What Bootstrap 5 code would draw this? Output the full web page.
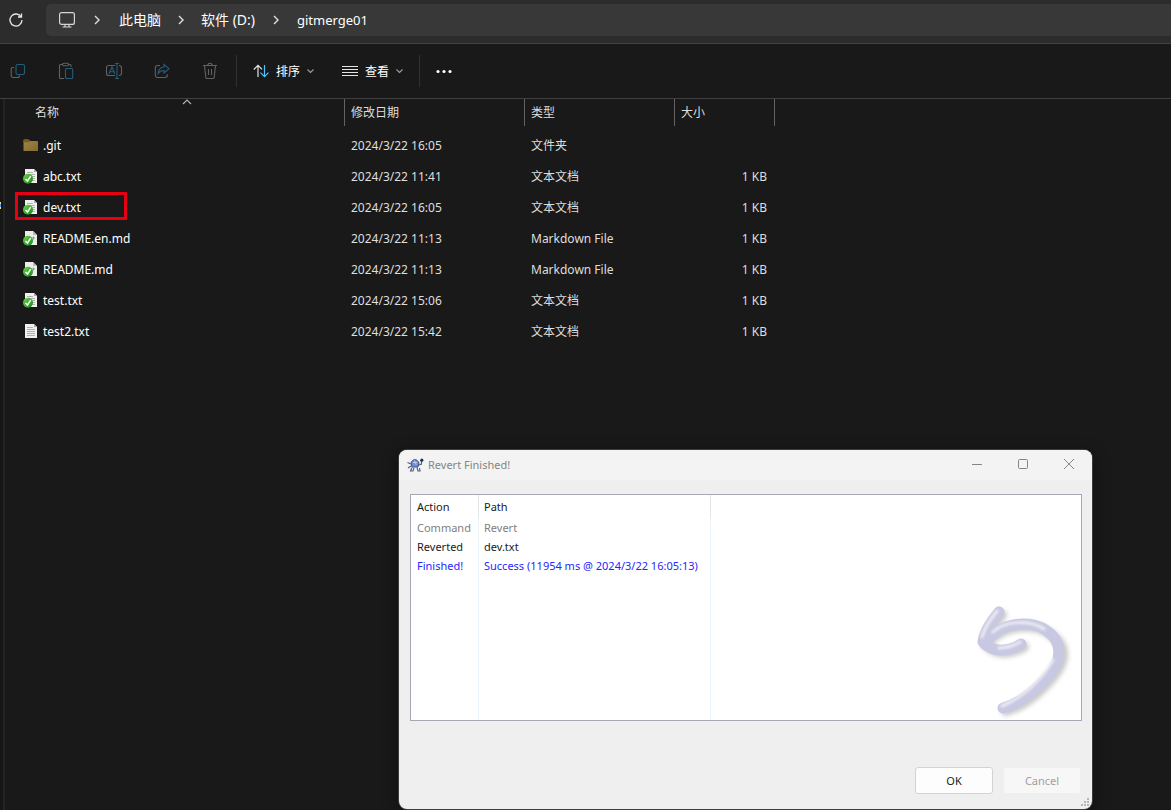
<!DOCTYPE html>
<html lang="zh-CN">
<head>
<meta charset="utf-8">
<meta name="viewport" content="width=device-width, initial-scale=1">
<title>gitmerge01</title>
<link href="https://cdn.jsdelivr.net/npm/bootstrap@5.3.0/dist/css/bootstrap.min.css" rel="stylesheet">
<style>
  body { background: #191919; color: #fff; font: 12px/16px "Noto Sans", "Noto Sans CJK SC", sans-serif; min-height: 100vh; overflow: hidden; }
  svg { display: block; flex: none; fill: none; }
  button { font: inherit; }
  a { color: inherit; text-decoration: none; }
  .addressbar { background: #2c2c2c; height: 44px; border-bottom: 1px solid #414141; padding: 0 0 3px 8px; gap: 22px; }
  .plain-btn { background: none; border: 0; padding: 0; color: #fff; }
  .crumbs { background: #383838; height: 32px; border-radius: 5px 0 0 5px; padding-left: 13px; }
  .crumbs ol { font-size: 14px; line-height: 18px; }
  .crumbs a[aria-current] { font-size: 13px; }
  .toolbar { height: 55px; border-bottom: 1px solid #404040; }
  .tool { width: 36px; height: 36px; }
  .tool-group { gap: 12px; }
  .rule { width: 1px; height: 32px; background: #303030; }
  .tool-menu { height: 32px; gap: 7px; }
  .tool-menu span { padding-top: 2px; }
  .edge { width: 5px; border-right: 2px solid #242424; background: #161616; }
  .edge svg { position: absolute; left: 0; top: 103px; }
  .files { table-layout: fixed; width: 770px; border-collapse: separate; border-spacing: 0; }
  .files th { font-weight: 400; height: 27px; padding: 0 6px; color: #dedede; border-right: 1px solid #636363; }
  .files th:first-child { padding-left: 30px; }
  .files td { height: 31px; padding: 0 6px; color: #dedede; }
  .files td:first-child { padding-left: 18px; color: #fff; position: relative; }
  .files td:last-child { text-align: right; padding-right: 8px; }
  .files .gap-row td { height: 4px; }
  .file-name { gap: 4px; }
  .marker { position: absolute; left: 10px; top: 0; width: 112px; height: 28px; border: 3px solid #e60012; }
  .sort-mark { position: absolute; left: 177px; top: 0; }
  .dialog-win { position: absolute; right: 79px; top: 450px; width: 693px; background: #efefef; color: #1b1b1b; border-radius: 8px; overflow: hidden; box-shadow: 0 0 0 1px #3c3c3c, 0 4px 18px rgba(0,0,0,.45); font-size: 11px; }
  .dialog-title { height: 30px; background: #f3f3f3; color: #858585; padding: 0 17px 0 8px; }
  .win-buttons { gap: 34px; }
  .log-box { margin: 14px 10px 0 11px; height: 227px; border: 1px solid #a6a9b5; background: #fff; position: relative; }
  .log-box table { height: 100%; border-collapse: separate; border-spacing: 0; table-layout: fixed; width: 300px; }
  .log-box th, .log-box td { padding: 0 0 0 5px; border-right: 1px solid #eaf3fa; height: 19px; font-weight: 400; white-space: nowrap; line-height: 19px; }
  .log-box th { height: 23px; line-height: 23px; border-color: #e5e5e5; }
  .log-box tr > :first-child { padding-left: 6px; }
  .log-box tr.fill-row td { height: auto; }
  .muted td { color: #808080; }
  .done td { color: #2626ff; }
  .revert-art { position: absolute; right: 6px; bottom: 0; }
  .dialog-foot { padding: 46px 11px 15px; gap: 10px; }
  .dlg-btn { width: 78px; height: 27px; border: 1px solid #d3d3d3; border-radius: 3px; background: #fdfdfd; color: #1b1b1b; padding: 0; }
  .dlg-btn:disabled { background: #f7f7f7; border-color: #efefef; color: #a0a0a0; }
  .grip { position: absolute; right: 2px; bottom: 1px; }
</style>
</head>
<body class="d-flex flex-column">
<svg width="0" height="0" class="position-absolute" aria-hidden="true">
  <defs>
    <linearGradient id="gGreen" x1="0" y1="0" x2="1" y2="1"><stop offset="0" stop-color="#6fd64a"/><stop offset="1" stop-color="#128a14"/></linearGradient>
    <linearGradient id="gFold" x1="0" y1="0" x2="1" y2="1"><stop offset="0" stop-color="#a08548"/><stop offset="1" stop-color="#86692f"/></linearGradient>
    <symbol id="page" viewBox="0 0 16 16"><path d="M2 0h9l3 3v11H2z" fill="#f1f1f1"/><path d="M11 0v3h3z" fill="#a9a9a9"/><path d="M4 3.500h6M4 5.500h8M4 7.500h8M4 9.500h8M4 11.500h8" stroke="#b0b0b0"/></symbol>
    <symbol id="tick" viewBox="0 0 16 16"><circle cx="5" cy="9.800" r="5" fill="url(#gGreen)"/><path d="M2.500 10l2 2 3.200-4.800" stroke="#fff" stroke-width="1.500"/></symbol>
    <symbol id="txt" viewBox="0 0 16 16"><use href="#page"/><use href="#tick"/></symbol>
    <symbol id="md" viewBox="0 0 16 16"><path d="M2 0h8l4 4v10H2z" fill="#ededed"/><path d="M10 0v4h4z" fill="#bcbcbc"/><path d="M9 7h3M10.500 5.500v3" stroke="#999"/><use href="#tick"/></symbol>
  </defs>
</svg>

<header class="addressbar d-flex align-items-center">
  <button class="plain-btn" aria-label="刷新"><svg width="16" height="16" stroke="#e8e8e8" stroke-width="1.300"><path d="M13.200 5A6 6 0 1 0 14 8M13.500 1.500V5H10"/></svg></button>
  <nav class="crumbs d-flex align-items-center flex-grow-1" aria-label="地址">
    <svg width="16" height="16" stroke="#d6d6d6" stroke-width="1.200"><rect x=".6" y=".6" width="14.800" height="11.800" rx="2"/><path d="M6 12.500v2M10 12.500v2M3.500 15h9"/></svg>
    <ol class="list-unstyled d-flex align-items-center mb-0">
      <li class="d-flex align-items-center"><svg width="44" height="12" stroke="#e0e0e0" stroke-width="1.400"><path d="M20 2l4 4-4 4"/></svg><a href="#">此电脑</a></li>
      <li class="d-flex align-items-center"><svg width="40" height="12" stroke="#e0e0e0" stroke-width="1.400"><path d="M18 2l4 4-4 4"/></svg><a href="#">软件 (D:)</a></li>
      <li class="d-flex align-items-center"><svg width="42" height="12" stroke="#e0e0e0" stroke-width="1.400"><path d="M19 2l4 4-4 4"/></svg><a href="#" aria-current="page">gitmerge01</a></li>
    </ol>
  </nav>
</header>

<div class="toolbar d-flex align-items-center" role="toolbar" aria-label="工具栏">
  <div class="tool-group d-flex">
    <button class="plain-btn tool d-flex align-items-center justify-content-center" aria-label="复制"><svg width="16" height="16" stroke="#626262" stroke-width="1.100"><path d="M4 4.500H3a1.800 1.800 0 0 0-1.800 1.800V12.500A2 2 0 0 0 3 14.500h4.500A2 2 0 0 0 9.500 12.500"/><rect x="6" y="1.500" width="8.500" height="10" rx="1.800" stroke="#265d7c"/></svg></button>
    <button class="plain-btn tool d-flex align-items-center justify-content-center" aria-label="粘贴"><svg width="16" height="18" stroke="#626262" stroke-width="1.100"><path d="M4.500 2.500H2.500a1 1 0 0 0-1 1V15.500a1 1 0 0 0 1 1H6M10.500 2.500h1.500a1 1 0 0 1 1 1V5"/><rect x="4.500" y="1.300" width="6" height="2.400" rx="1.200"/><rect x="7.500" y="6.500" width="7.200" height="10" rx="1" stroke="#265d7c"/></svg></button>
    <button class="plain-btn tool d-flex align-items-center justify-content-center" aria-label="重命名"><svg width="18" height="18" stroke="#626262" stroke-width="1.100"><path d="M10 3.500H3.500a2 2 0 0 0-2 2v6a2 2 0 0 0 2 2H10M14 3.500a2.500 2.500 0 0 1 2.500 2.500v5a2.500 2.500 0 0 1-2.500 2.500"/><path d="M4 12l3-7 3 7M5 9.700h4M12 1.500v15M10 1.500h4M10 16.500h4" stroke="#265d7c"/></svg></button>
    <button class="plain-btn tool d-flex align-items-center justify-content-center" aria-label="共享"><svg width="16" height="16" stroke="#626262" stroke-width="1.100"><path d="M6 2.500H3.500a2.200 2.200 0 0 0-2.200 2.200v7.600a2.200 2.200 0 0 0 2.200 2.200h7.600a2.200 2.200 0 0 0 2.200-2.200v-1"/><path d="M10 1.500l5 4.200-5 4.300V7.500C7.500 7.300 6 8 4.200 10.500 4.500 6.500 6.500 4.200 10 4z" stroke="#265d7c"/></svg></button>
    <button class="plain-btn tool d-flex align-items-center justify-content-center" aria-label="删除"><svg width="16" height="18" stroke="#626262" stroke-width="1.100"><path d="M1 3.500h14M2.500 3.500l1.300 11.800a1.400 1.400 0 0 0 1.400 1.200h5.600a1.400 1.400 0 0 0 1.400-1.200L13.500 3.500M5.800 3.500a2.200 2.200 0 0 1 4.400 0M6.500 7v6M9.500 7v6"/></svg></button>
  </div>
  <div class="rule ms-2"></div>
  <button class="plain-btn tool-menu d-flex align-items-center ms-3"><svg width="16" height="16" stroke="#e4e4e4" stroke-width="1.200"><path d="M5 14V2.500M.8 6.500L5 2.300l4 4"/><path d="M11.500 2v11.500M7.500 9.700l4 4 4-4" stroke="#4cc2ff"/></svg><span>排序</span><svg width="7" height="8" stroke="#a0a0a0" stroke-width="1.100"><path d="M.5 2.500l3 3 3-3"/></svg></button>
  <button class="plain-btn tool-menu d-flex align-items-center ms-4"><svg width="20" height="16" stroke="#e4e4e4"><path d="M4 3.500h16M4 6.500h16M4 9.500h16M4 12.500h16"/></svg><span>查看</span><svg width="7" height="8" stroke="#a0a0a0" stroke-width="1.100"><path d="M.5 2.500l3 3 3-3"/></svg></button>
  <div class="rule ms-3"></div>
  <button class="plain-btn ms-3" aria-label="更多"><svg width="16" height="16"><g fill="#fff"><circle cx="2" cy="8.500" r="1.600"/><circle cx="8" cy="8.500" r="1.600"/><circle cx="14" cy="8.500" r="1.600"/></g></svg></button>
</div>

<main class="d-flex flex-grow-1">
  <div class="edge position-relative"><svg width="3" height="8"><path d="M0 1h1M0 6h1" stroke="#f6dd8a" stroke-width="2"/><path d="M0 3.500h1" stroke="#4d8fe0" stroke-width="3"/></svg></div>
  <div class="position-relative">
    <table class="files">
      <colgroup><col style="width:340px"><col style="width:180px"><col style="width:150px"><col style="width:100px"></colgroup>
      <thead><tr><th>名称<svg class="sort-mark" width="10" height="6" stroke="#b0b0b0" stroke-width="1.200"><path d="M1 5l4-4 4 4"/></svg></th><th>修改日期</th><th>类型</th><th>大小</th></tr></thead>
      <tbody>
        <tr class="gap-row" aria-hidden="true"><td colspan="4"></td></tr>
        <tr><td><div class="file-name d-flex align-items-center"><svg width="16" height="16"><path d="M.5 2.500a1 1 0 0 1 1-1h4l1.500 1.500h7a1 1 0 0 1 1 1V13H.5z" fill="url(#gFold)"/><path d="M.5 2.500a1 1 0 0 1 1-1h4L7 3 6 4.200H.5z" fill="#7c5c17"/></svg><span>.git</span></div></td><td>2024/3/22 16:05</td><td>文件夹</td><td></td></tr>
        <tr><td><div class="file-name d-flex align-items-center"><svg width="16" height="16"><use href="#txt"/></svg><span>abc.txt</span></div></td><td>2024/3/22 11:41</td><td>文本文档</td><td>1 KB</td></tr>
        <tr><td><div class="file-name d-flex align-items-center"><svg width="16" height="16"><use href="#txt"/></svg><span>dev.txt</span></div><div class="marker"></div></td><td>2024/3/22 16:05</td><td>文本文档</td><td>1 KB</td></tr>
        <tr><td><div class="file-name d-flex align-items-center"><svg width="16" height="16"><use href="#md"/></svg><span>README.en.md</span></div></td><td>2024/3/22 11:13</td><td>Markdown File</td><td>1 KB</td></tr>
        <tr><td><div class="file-name d-flex align-items-center"><svg width="16" height="16"><use href="#md"/></svg><span>README.md</span></div></td><td>2024/3/22 11:13</td><td>Markdown File</td><td>1 KB</td></tr>
        <tr><td><div class="file-name d-flex align-items-center"><svg width="16" height="16"><use href="#txt"/></svg><span>test.txt</span></div></td><td>2024/3/22 15:06</td><td>文本文档</td><td>1 KB</td></tr>
        <tr><td><div class="file-name d-flex align-items-center"><svg width="16" height="16"><use href="#page"/></svg><span>test2.txt</span></div></td><td>2024/3/22 15:42</td><td>文本文档</td><td>1 KB</td></tr>
      </tbody>
    </table>
  </div>
</main>

<section class="dialog-win" role="dialog" aria-labelledby="dlgTitle">
  <div class="dialog-title d-flex align-items-center">
    <svg width="17" height="14" class="me-1"><path d="M4 5C5 1 10 0 12 5l-1 4H5z" fill="#6f8fd8" stroke="#46527a"/><path d="M6 4.500h4M7.500 2.500l1.500 4" stroke="#b9caf5"/><path d="M4 6L.5 4.500M4 8L1 10M5 9.500L3.500 13H6l1-3M10 9.500L11 13h2l-.5-3M12 7l2.500-1V3" stroke="#56607a" stroke-width="1.200"/><circle cx="14.800" cy="2.200" r="1.600" fill="#1c3461"/></svg>
    <span id="dlgTitle" class="flex-grow-1">Revert Finished!</span>
    <div class="win-buttons d-flex align-items-center">
      <button class="plain-btn" aria-label="Minimize"><svg width="12" height="12" stroke="#858585"><path d="M1 5.500h10"/></svg></button>
      <button class="plain-btn" aria-label="Maximize"><svg width="12" height="12" stroke="#858585"><rect x="1.500" y=".5" width="9" height="9" rx="1"/></svg></button>
      <button class="plain-btn" aria-label="Close"><svg width="12" height="12" stroke="#858585"><path d="M1 0l10 10M11 0L1 10"/></svg></button>
    </div>
  </div>
  <div class="log-box">
    <table>
      <colgroup><col style="width:68px"><col style="width:232px"></colgroup>
      <thead><tr><th>Action</th><th>Path</th></tr></thead>
      <tbody>
        <tr class="muted"><td>Command</td><td>Revert</td></tr>
        <tr><td>Reverted</td><td>dev.txt</td></tr>
        <tr class="done"><td>Finished!</td><td>Success (11954 ms @ 2024/3/22 16:05:13)</td></tr>
        <tr class="fill-row" aria-hidden="true"><td></td><td></td></tr>
      </tbody>
    </table>
    <svg class="revert-art" width="104" height="120" viewBox="0 0 104 120" stroke-linecap="round" stroke-linejoin="round">
      <defs>
        <filter id="soft" x="-20%" y="-20%" width="140%" height="140%"><feGaussianBlur stdDeviation="2"/></filter>
        <filter id="shine" x="-20%" y="-20%" width="140%" height="140%"><feGaussianBlur stdDeviation="1"/></filter>
      </defs>
      <g stroke="#cbcbcb" stroke-width="10" transform="translate(3 3)" filter="url(#soft)"><path d="M28 12C18 24 12 33 12 41C22 53 37 51 50 44"/><path d="M12 42C30 20 62 20 76 31C96 44 90 60 80 73C66 90 50 103 32 108"/></g>
      <g stroke="#c8c8e3" stroke-width="11"><path d="M28 12C18 24 13 33 12 42C22 54 39 51 50 44"/><path d="M14 44C30 20 62 20 76 31C92 42 90 60 80 73C66 90 50 103 32 108"/></g>
      <g stroke="#ebebf3" stroke-width="3" filter="url(#shine)"><path d="M26 11C17 22 13 29 11 37M28 48C35 48 42 46 49 42"/><path d="M22 32C34 20 60 20 73 29M82 60C70 80 52 97 31 106"/></g>
    </svg>
  </div>
  <div class="dialog-foot d-flex justify-content-end">
    <button class="dlg-btn">OK</button>
    <button class="dlg-btn" disabled>Cancel</button>
  </div>
  <svg class="grip" width="10" height="10"><path fill="#b8b8b8" d="M7 0h2v2H7zM4 3h2v2H4zM7 3h2v2H7zM1 6h2v2H1zM4 6h2v2H4zM7 6h2v2H7z"/></svg>
</section>
<script src="https://cdn.jsdelivr.net/npm/bootstrap@5.3.0/dist/js/bootstrap.bundle.min.js"></script>
</body>
</html>
